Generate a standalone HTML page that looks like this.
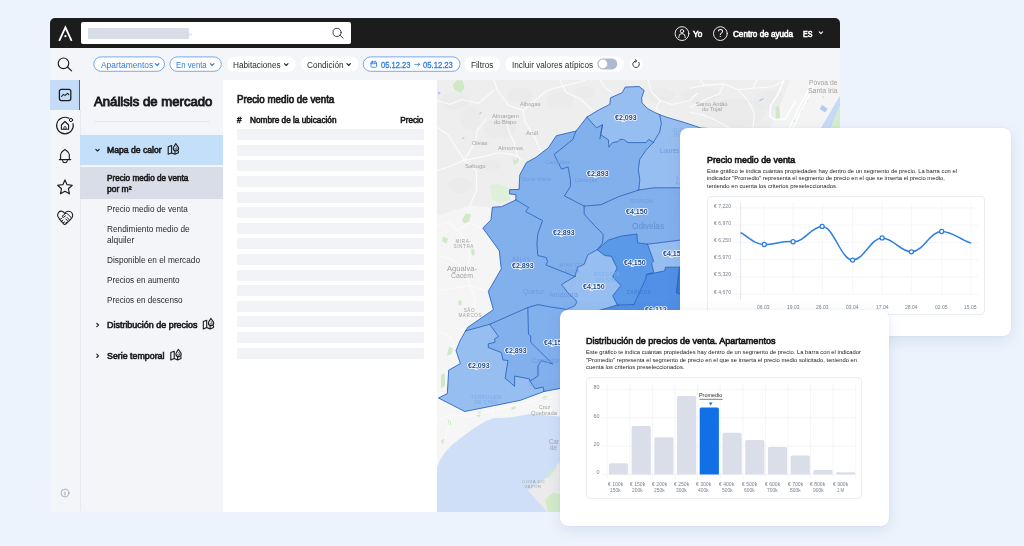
<!DOCTYPE html>
<html lang="es">
<head>
<meta charset="utf-8">
<title>Análisis de mercado</title>
<style>
*{box-sizing:border-box;margin:0;padding:0}
html,body{width:1024px;height:546px;overflow:hidden}
body{background:#ecf3fc;font-family:"Liberation Sans",sans-serif;color:#1c1c1e;position:relative}
#root{position:absolute;left:0;top:0;width:1024px;height:546px;will-change:transform}
.a{position:absolute}
.t{position:absolute;white-space:nowrap;line-height:1;transform-origin:0 0}
svg{position:absolute;overflow:visible}
#win{position:absolute;left:50px;top:18px;width:790px;height:493.5px;background:#f3f5f9;border-radius:5px 5px 0 0;overflow:hidden}
.pill{position:absolute;top:56.3px;height:15.4px;border-radius:8px;background:#fff}
.pill.b{border:1px solid #78aaea}
.row{position:absolute;left:237px;width:186.5px;height:11px;background:#f1f3f7;border-radius:1px}
.card{position:absolute;background:#fff;border-radius:8px;box-shadow:0 4px 14px rgba(80,110,160,.14),0 0 2px rgba(80,110,160,.10)}
.cbox{position:absolute;border:1px solid #e9ecf2;border-radius:4px;background:#fff}
</style>
</head>
<body>
<div id="root">
<div id="win"></div>
<div class="a" style="left:50px;top:18px;width:790px;height:30.2px;background:#1c1c1c;border-radius:5px 5px 0 0"></div>
<div class="a" style="left:81px;top:22.4px;width:270.3px;height:21.9px;background:#fff;border-radius:2px"></div>
<div class="a" style="left:87.5px;top:28.2px;width:101px;height:10.5px;background:#d9dde7;border-radius:1px"></div>
<div class="t" style="left:189.00px;top:31.00px;font-size:6px;color:#d5d9e2;">e</div>
<svg width="1024" height="546" viewBox="0 0 1024 546" style="left:0;top:0" fill="none" stroke-linecap="round" stroke-linejoin="round">
<path d="M59.2 40.900 L65.4 27.300 L71.600 40.900" stroke="#fff" stroke-width="1.800" stroke-linecap="butt" stroke-linejoin="miter"/><circle cx="65.4" cy="36.200" r="1.100" fill="#fff"/>
<circle cx="337.1" cy="32.4" r="4.1" stroke="#3a3a3c" stroke-width="0.95"/><path d="M340.1 35.3 L343.2 38.3" stroke="#3a3a3c" stroke-width="0.95"/>
<circle cx="682" cy="33.6" r="6.9" stroke="#fff" stroke-width="0.9"/><circle cx="682" cy="31.2" r="1.7" stroke="#fff" stroke-width="0.9"/><path d="M678.9 37.6 v-0.9 a3.1 3.1 0 0 1 6.2 0 v0.9" stroke="#fff" stroke-width="0.9"/>
<circle cx="720.4" cy="33.6" r="6.9" stroke="#fff" stroke-width="0.9"/>
<path d="M819.2 31.9 l1.7 1.7 l1.7 -1.7" stroke="#fff" stroke-width="1.05"/>
</svg>
<div class="t" style="left:717.55px;top:28.00px;font-size:10.6px;color:#fff;">?</div>
<div class="t" style="left:693.00px;top:30.00px;font-size:8.5px;-webkit-text-stroke:0.60px;color:#fff;transform:scaleX(0.9662);">Yo</div>
<div class="t" style="left:733.30px;top:30.00px;font-size:8.5px;-webkit-text-stroke:0.60px;color:#fff;transform:scaleX(0.9561);">Centro de ayuda</div>
<div class="t" style="left:802.60px;top:30.00px;font-size:8.5px;-webkit-text-stroke:0.60px;color:#fff;transform:scaleX(0.8287);">ES</div>
<div class="a" style="left:50px;top:79.5px;width:30.3px;height:30.3px;background:#c4dcf8;border-right:1.6px solid #1b6bd6"></div>
<div class="a" style="left:80.3px;top:109.8px;width:1px;height:401.7px;background:#e6e9ef"></div>
<svg width="1024" height="546" viewBox="0 0 1024 546" style="left:0;top:0">
<rect x="93.8" y="56.9" width="70.7" height="14.4" rx="7.2" fill="#fff" stroke="#78aaea" stroke-width="1"/>
<rect x="169.9" y="56.9" width="51.4" height="14.4" rx="7.2" fill="#fff" stroke="#78aaea" stroke-width="1"/>
<rect x="227.0" y="56.4" width="68.7" height="15.4" rx="7.7" fill="#fff"/>
<rect x="300.6" y="56.4" width="58.1" height="15.4" rx="7.7" fill="#fff"/>
<rect x="363.3" y="56.9" width="96.7" height="14.4" rx="7.2" fill="#fff" stroke="#78aaea" stroke-width="1"/>
<rect x="464.4" y="56.4" width="35.9" height="15.4" rx="7.7" fill="#fff"/>
<rect x="505.2" y="56.4" width="118.4" height="15.4" rx="7.7" fill="#fff"/>
<circle cx="636.2" cy="64.1" r="7.4" fill="#fff" stroke="#eceef3" stroke-width="0.6"/>
<rect x="597.4" y="58.5" width="19.9" height="10.9" rx="5.45" fill="#adb9d0"/><circle cx="602.9" cy="63.95" r="4.35" fill="#fff"/>
</svg>
<div class="t" style="left:100.50px;top:61.00px;font-size:8.3px;color:#2f7be0;transform:scaleX(1.0105);">Apartamentos</div>
<div class="t" style="left:176.10px;top:61.00px;font-size:8.3px;color:#2f7be0;transform:scaleX(0.9370);">En venta</div>
<div class="t" style="left:233.40px;top:61.00px;font-size:8.3px;color:#2a2a2e;transform:scaleX(0.9923);">Habitaciones</div>
<div class="t" style="left:307.20px;top:61.00px;font-size:8.3px;color:#2a2a2e;transform:scaleX(0.9917);">Condición</div>
<div class="t" style="left:380.60px;top:61.00px;font-size:8.9px;-webkit-text-stroke:0.31px;color:#2f7be0;transform:scaleX(0.8510);">05.12.23</div>
<div class="t" style="left:423.40px;top:61.00px;font-size:8.9px;-webkit-text-stroke:0.31px;color:#2f7be0;transform:scaleX(0.8626);">05.12.23</div>
<div class="t" style="left:471.30px;top:61.00px;font-size:8.3px;color:#2a2a2e;transform:scaleX(0.9914);">Filtros</div>
<div class="t" style="left:511.50px;top:61.00px;font-size:8.3px;color:#2a2a2e;transform:scaleX(0.9879);">Incluir valores atípicos</div>
<svg width="1024" height="546" viewBox="0 0 1024 546" style="left:0;top:0" fill="none" stroke-linecap="round" stroke-linejoin="round">
<path d="M155.4 63.7 l1.8 1.8 l1.8 -1.8" stroke="#2f7be0" stroke-width="1.1"/>
<path d="M210.4 63.7 l1.8 1.8 l1.8 -1.8" stroke="#2f7be0" stroke-width="1.1"/>
<path d="M284.4 63.7 l1.8 1.8 l1.8 -1.8" stroke="#2a2a2e" stroke-width="1.1"/>
<path d="M346.9 63.7 l1.8 1.8 l1.8 -1.8" stroke="#2a2a2e" stroke-width="1.1"/>
<rect x="371" y="61.900" width="5.600" height="5.400" rx="0.900" stroke="#2f7be0" stroke-width="0.850"/><path d="M371 63.700 h5.600 M372.500 61 v1.400 M375.100 61 v1.400" stroke="#2f7be0" stroke-width="0.850"/>
<path d="M414.600 64.400 h5.200 M418.100 62.800 l1.700 1.600 l-1.700 1.600" stroke="#2f7be0" stroke-width="0.8"/>
<path d="M638.8 62.300 a3.300 3.300 0 1 1 -2.600 -1.400" stroke="#2a2a2e" stroke-width="0.900"/><path d="M635.200 59.600 l1.500 1.300 l-1.400 1.500" stroke="#2a2a2e" stroke-width="0.900"/>
</svg>
<div class="t" style="left:94.00px;top:96.00px;font-size:12.5px;-webkit-text-stroke:0.88px;transform:scaleX(1.0519);">Análisis de mercado</div>
<div class="a" style="left:94px;top:120.8px;width:115.7px;height:1px;background:#e6e9ee"></div>
<div class="a" style="left:80.3px;top:134.9px;width:142.5px;height:30.3px;background:#c4dffa"></div>
<div class="a" style="left:80.3px;top:166.8px;width:142.5px;height:31.8px;background:#d9dde7"></div>
<div class="t" style="left:106.90px;top:146.00px;font-size:8.7px;-webkit-text-stroke:0.61px;transform:scaleX(0.9934);">Mapa de calor</div>
<div class="t" style="left:106.70px;top:174.00px;font-size:8.4px;-webkit-text-stroke:0.59px;transform:scaleX(0.9755);">Precio medio de venta</div>
<div class="t" style="left:106.70px;top:185.00px;font-size:8.4px;-webkit-text-stroke:0.59px;transform:scaleX(1.0123);">por m²</div>
<div class="t" style="left:106.70px;top:205.00px;font-size:8.4px;color:#2a2a2e;transform:scaleX(0.9707);">Precio medio de venta</div>
<div class="t" style="left:106.70px;top:225.00px;font-size:8.4px;color:#2a2a2e;transform:scaleX(0.9855);">Rendimiento medio de</div>
<div class="t" style="left:106.70px;top:236.00px;font-size:8.4px;color:#2a2a2e;transform:scaleX(1.0068);">alquiler</div>
<div class="t" style="left:106.70px;top:256.00px;font-size:8.4px;color:#2a2a2e;transform:scaleX(0.9840);">Disponible en el mercado</div>
<div class="t" style="left:106.70px;top:276.00px;font-size:8.4px;color:#2a2a2e;transform:scaleX(0.9732);">Precios en aumento</div>
<div class="t" style="left:106.70px;top:296.00px;font-size:8.4px;color:#2a2a2e;transform:scaleX(0.9711);">Precios en descenso</div>
<div class="t" style="left:106.70px;top:321.00px;font-size:8.7px;-webkit-text-stroke:0.61px;transform:scaleX(1.0297);">Distribución de precios</div>
<div class="t" style="left:106.70px;top:352.00px;font-size:8.7px;-webkit-text-stroke:0.61px;transform:scaleX(1.0177);">Serie temporal</div>
<div class="a" style="left:222.8px;top:79.5px;width:214.2px;height:432px;background:#fff"></div>
<div class="t" style="left:237.00px;top:95.00px;font-size:10.4px;-webkit-text-stroke:0.73px;transform:scaleX(0.9411);">Precio medio de venta</div>
<div class="t" style="left:237.30px;top:117.00px;font-size:8.2px;-webkit-text-stroke:0.57px;transform:scaleX(1.0082);">#</div>
<div class="t" style="left:250.00px;top:117.00px;font-size:8.2px;-webkit-text-stroke:0.57px;transform:scaleX(1.0054);">Nombre de la ubicación</div>
<div class="t" style="left:400.20px;top:117.00px;font-size:8.2px;-webkit-text-stroke:0.57px;">Precio</div>
<div class="row" style="top:129.10px"></div>
<div class="row" style="top:144.70px"></div>
<div class="row" style="top:160.30px"></div>
<div class="row" style="top:175.90px"></div>
<div class="row" style="top:191.50px"></div>
<div class="row" style="top:207.10px"></div>
<div class="row" style="top:222.70px"></div>
<div class="row" style="top:238.30px"></div>
<div class="row" style="top:253.90px"></div>
<div class="row" style="top:269.50px"></div>
<div class="row" style="top:285.10px"></div>
<div class="row" style="top:300.70px"></div>
<div class="row" style="top:316.30px"></div>
<div class="row" style="top:331.90px"></div>
<div class="row" style="top:347.50px"></div>
<div class="a" style="left:437px;top:79.5px;width:403px;height:432px;background:#eeeeee;overflow:hidden">
<svg width="403" height="432" viewBox="437 79.5 403 432" style="left:0;top:0;overflow:hidden" fill="none" stroke-linejoin="round" stroke-linecap="round">
<ellipse cx="455" cy="100" rx="14" ry="9" fill="#e7e7e7" opacity="0.4"/>
<ellipse cx="470" cy="118" rx="10" ry="12" fill="#e7e7e7" opacity="0.4"/>
<ellipse cx="500" cy="128" rx="16" ry="10" fill="#e7e7e7" opacity="0.4"/>
<ellipse cx="520" cy="95" rx="12" ry="8" fill="#e7e7e7" opacity="0.4"/>
<ellipse cx="560" cy="100" rx="14" ry="8" fill="#e7e7e7" opacity="0.4"/>
<ellipse cx="735" cy="112" rx="30" ry="14" fill="#e7e7e7" opacity="0.4"/>
<ellipse cx="700" cy="95" rx="20" ry="8" fill="#e7e7e7" opacity="0.4"/>
<ellipse cx="770" cy="100" rx="16" ry="10" fill="#e7e7e7" opacity="0.4"/>
<ellipse cx="660" cy="95" rx="14" ry="7" fill="#e7e7e7" opacity="0.4"/>
<ellipse cx="490" cy="165" rx="10" ry="6" fill="#e7e7e7" opacity="0.4"/>
<ellipse cx="460" cy="185" rx="12" ry="8" fill="#e7e7e7" opacity="0.4"/>
<ellipse cx="585" cy="92" rx="10" ry="6" fill="#e7e7e7" opacity="0.4"/>
<path d="M437 215 L470 205 L492 207 L491 219 L483 228 L499 250 L501 268 L488 291 L493 309 L468 327 L456 350 L460 363 L449 370 L447 393 L437 398 Z" fill="#f5f5f5"/>
<path d="M437 398 L438.5 397.5 L464.8 411 L520.5 399.8 L543.9 391 L566 387 L566 417 L530.7 413.5 L507.3 417.3 L494 417.5 L486 420.5 L476 426.5 L462 436.5 L452 444.5 L445 452 L440 460 L437 467 Z" fill="#f6f6f6"/>
<path d="M790 79.5 L840 79.5 L840 95.3 L820.5 128.5 L770 128.5 Z" fill="#f4f4f4"/>
<path d="M437 467 L440 460 L445 452 L452 444.500 L462 436.500 L476 426.500 L486 420.500 L494 417.500 L507.3 417.3 L530.7 413.500 L559.3 415.9 L600 415 L600 520 L437 520 Z" fill="#cfdff8"/>
<path d="M840 95.3 L830.6 110.9 L820.5 128.5 L830.6 128.5 L840 104.7 Z" fill="#c6daf6"/>
<path d="M840 104.7 L830.6 128.5 L840 128.5 Z" fill="#d4ecc8"/>
<path d="M819.6 108.4 l2.600 -3.800 l5.500 3.600 l-2.600 3.800 z" fill="#b4cbef"/>
<path d="M560 462 L557 464.3 L551 470 L545.4 477.5 L538 484 L527.8 490 L535 498 L546.8 511 L548 512 L600 512 L600 462 Z" fill="#ebebeb"/>
<path d="M557 464.3 L551 470 L545.4 477.5 L549 477 L556 468 Z M545 499 L553 492 L560 494 L560 512 L548 512 Z" fill="#d3ebc8"/>
<path d="M452.6 84.5 L457.1 79.5 L462.6 80 L464.5 87.2 L460.8 92.7 L454.4 89.1 Z" fill="#cfe9c8"/>
<path d="M512.5 157 l3 3.5 l2.5 -4 l0.5 5 l-4.5 3 z" fill="#cfe9c8"/>
<path d="M490 185 L497 183 L507 186 L509.5 189 L509.5 199 L500 203 L492 199 Z" fill="#dff0da"/>
<path d="M462 219 l4 -6 l5 1 l-2 7 l-5 2 z M471 249 l3 -1 l1 6 l-3 1 z M443 236 l5 2 l-1 5 l-5 -2 z M449 346 l4 2 l-2 6 l-4 1 z M441 374 l4 -1 l0 12 l-4 3 z M476 415 l3 -4 l2 0.500 l-1 5 z M511 407 l4 -2 l1 2.500 l-4 2 z M542 397 l4 -2 l2 3 l-4.500 2 z M448 420 l3 -1 l0 5 l-3 1 z M441 440 l3 -2 l1 4 l-3 2 z M458 301 l3 -2 l1 5 l-3 1 z" fill="#cfe9c8"/>
<path d="M775.6 106.2 l3.8 -0.4 l0.6 12 l-4.4 0.8 z M713 96 l1.5 0 l0 1.5 l-1.5 0 z" fill="#cfe9c8"/>
<path d="M812 92 l1.5 -2 l1 0.8 l-1.5 2 z M806 101 l1.5 -2 l1 0.8 l-1.5 2 z M800 112 l1.5 -2 l1 0.8 l-1.5 2 z M793 121 l1.500 -2 l1 0.8 l-1.5 2 z M822 97 l1.5 -2 l1 0.8 l-1.5 2 z" fill="#cfeac6"/>
<path d="M479 113 l2 -1.500 l0.800 0.800 l-2 1.500 z M462 138 l1.800 -1.500 l0.800 0.800 l-1.800 1.500 z M438 91 l2.500 1 l-0.500 2 l-2 -1 z M759 100 l4 -2.500 l0.800 1 l-4 2.500 z" fill="#a9c4f0"/>
<path d="M493.8 79.0 L497.4 90.0 L508.4 104.6 L523.1 110.1 L524.9 121.1 L535.9 139.4 L541.4 152.3 M437.0 126.6 L448.0 134.0 L457.1 148.6 L464.5 159.6 L476.4 170.6 L476.4 190.0 L470.0 205.0 M464.5 159.6 L484.6 155.9 L497.4 152.3 L513.9 154.1 L523.1 159.6 M486.5 117.5 L477.3 130.3 L475.5 141.3 L464.5 159.6 M523.1 110.1 L546.9 90.0 L567.0 84.5 L585.0 80.0 M506.6 123.0 L510.3 134.0 L514.0 141.3 L517.6 156.0 M437.0 100.0 L450.0 104.0 L462.0 99.0 L478.0 103.0 L493.8 90.0 M437.0 170.0 L450.0 166.0 L464.5 159.6 M560.0 79.5 L566.0 92.0 L580.0 98.0 L592.0 110.0 M600.0 79.5 L606.0 88.0 L612.0 92.0 M648.0 79.5 L652.0 92.0 L660.0 100.0 L672.0 104.0 L690.0 100.0 L697.0 93.0 M690.0 87.8 L704.6 84.9 L723.7 83.4 L738.3 89.3 L753.0 87.8 L772.0 86.3 L783.7 80.5 M723.7 83.4 L719.3 93.6 L707.6 98.0 L690.0 106.8 M738.3 89.3 L748.6 101.0 L754.4 112.7 L753.0 127.3 M704.6 84.9 L700.0 79.5 M753.0 87.8 L757.0 79.5 M690.0 112.0 L702.0 114.0 L716.0 120.0 L730.0 128.0 M660.0 100.0 L656.0 108.0 L664.0 116.0 L676.0 119.0 M437.0 225.0 L448.0 222.0 L458.0 230.0 L466.0 240.0 L470.0 256.0 L466.0 270.0 L470.0 285.0 L476.0 300.0 L470.0 318.0 L462.0 330.0 M437.0 255.0 L450.0 258.0 L466.0 270.0 M458.0 230.0 L470.0 222.0 L483.0 228.0 M437.0 290.0 L452.0 288.0 L470.0 285.0 L488.0 291.0 M437.0 330.0 L450.0 336.0 L456.0 350.0 M437.0 420.0 L452.0 414.0 L470.0 416.0 L492.0 410.0 L520.0 404.0 L545.0 398.0 L566.0 394.0 M452.0 414.0 L447.0 430.0 L444.0 443.0 M492.0 410.0 L494.0 417.0" stroke="#fbfbfb" stroke-width="1.1" fill="none"/>
<path d="M783.7 80.5 L777.9 93.6 L770.6 105.4 L769.8 115.6 L775.0 119.3 L785.2 118.5 L791.0 108.3 L795.5 101.0 M812.0 79.5 L808.6 89.3 L798.4 108.3 L789.6 127.3 L788.0 131.0 M816.0 79.5 L811.6 90.3 L801.4 109.3 L792.6 128.3" stroke="#ffffff" stroke-width="1.5" fill="none"/>
<path d="M586.9 116.6 L599.5 109.0 L609.8 103.9 L610.5 97.3 L622.2 92.2 L625.2 86.6 L639.1 86.0 L644.2 90.0 L641.7 97.3 L642.0 102.4 L647.9 108.3 L654.5 111.9 L659.6 114.1 L661.3 122.9 L659.6 131.7 L653.4 141.8 L648.7 138.9 L646.0 142.1 L628.1 142.1 L623.5 138.9 L619.9 138.9 L618.0 141.2 L612.5 142.1 L608.9 146.7 L608.4 139.3 L600.6 134.3 L602.5 124.2 L596.5 127.4 L586.9 116.6 Z" fill="#90baf0" fill-opacity="0.93"/>
<path d="M659.6 114.1 L665.0 116.2 L684.5 122.0 L700.9 127.5 L712.0 128.3 L720.0 140.0 L720.0 187.3 L690.0 187.3 L653.7 187.3 L638.8 189.5 L639.8 179.3 L638.3 169.0 L639.8 158.8 L645.7 150.0 L653.4 141.8 L659.6 131.7 L661.3 122.9 Z" fill="#90baf0" fill-opacity="0.93"/>
<path d="M576.1 130.5 L586.9 116.6 L596.5 127.4 L602.5 124.2 L600.6 134.3 L608.4 139.3 L608.9 146.7 L612.5 142.1 L618.0 141.2 L619.9 138.9 L623.5 138.9 L628.1 142.1 L646.0 142.1 L648.7 138.9 L653.4 141.8 L645.7 150.0 L639.8 158.8 L638.3 169.0 L639.8 179.3 L638.8 189.5 L618.6 196.1 L601.0 204.2 L584.2 205.6 L564.4 195.4 L570.3 186.0 L570.5 180.0 L568.1 166.4 L561.5 168.6 L554.2 153.9 L572.5 139.3 L576.1 130.5 Z" fill="#79abed" fill-opacity="0.93"/>
<path d="M576.1 130.5 L556.4 135.2 L548.3 147.3 L535.9 156.9 L526.4 162.0 L519.8 174.4 L519.0 189.0 L509.6 189.1 L509.6 193.5 L515.9 194.1 L515.9 199.4 L528.6 207.0 L525.7 211.1 L542.5 220.1 L537.8 233.3 L536.9 243.6 L537.8 255.0 L546.2 257.0 L547.6 260.9 L546.1 264.5 L575.0 276.0 L577.6 266.7 L584.2 263.8 L587.8 254.3 L597.3 249.2 L602.5 242.6 L603.2 233.8 L594.4 225.0 L584.2 213.7 L584.2 205.6 L564.4 195.4 L570.3 186.0 L570.5 180.0 L568.1 166.4 L561.5 168.6 L554.2 153.9 L572.5 139.3 L576.1 130.5 Z" fill="#79abed" fill-opacity="0.93"/>
<path d="M515.9 199.4 L501.5 206.2 L492.4 206.7 L491.0 219.4 L482.8 227.5 L499.3 250.2 L500.8 265.0 L501.4 268.2 L488.3 290.9 L493.4 309.2 L467.8 326.8 L465.6 330.4 L489.7 323.8 L527.8 307.0 L538.0 304.1 L550.0 306.4 L566.6 308.9 L574.4 305.5 L576.8 302.0 L575.5 299.0 L569.5 294.2 L561.5 284.0 L575.0 276.0 L546.1 264.5 L547.6 260.9 L546.2 257.0 L537.8 255.0 L536.9 243.6 L537.8 233.3 L542.5 220.1 L525.7 211.1 L528.6 207.0 L515.9 199.4 Z" fill="#79abed" fill-opacity="0.93"/>
<path d="M584.2 205.6 L584.2 213.7 L594.4 225.0 L603.2 233.8 L602.5 242.6 L597.3 249.2 L608.3 239.6 L621.5 235.5 L636.9 233.5 L637.6 242.3 L647.6 243.7 L690.0 238.4 L690.0 187.3 L653.7 187.3 L638.8 189.5 L618.6 196.1 L601.0 204.2 L584.2 205.6 Z" fill="#79abed" fill-opacity="0.93"/>
<path d="M597.3 249.2 L587.8 254.3 L584.2 263.8 L577.6 266.7 L575.0 276.0 L561.5 284.0 L569.5 294.2 L575.5 299.0 L576.8 302.0 L574.4 305.5 L566.6 308.9 L566.6 314.0 L590.0 314.0 L598.8 310.0 L617.4 304.5 L612.7 295.3 L620.8 285.0 L612.7 276.3 L617.1 267.5 L611.3 255.8 L604.7 255.0 Z" fill="#90baf0" fill-opacity="0.93"/>
<path d="M597.3 249.2 L608.3 239.6 L621.5 235.5 L636.9 233.5 L637.6 242.3 L647.6 243.7 L653.7 260.9 L651.5 262.3 L653.7 271.9 L646.4 274.1 L645.7 278.4 L634.0 304.0 L617.4 304.5 L612.7 295.3 L620.8 285.0 L612.7 276.3 L617.1 267.5 L611.3 255.8 L604.7 255.0 Z" fill="#4f92e7" fill-opacity="0.93"/>
<path d="M647.6 243.7 L690.0 238.4 L690.0 266.7 L665.4 266.7 L664.7 270.4 L646.4 274.1 L653.7 271.9 L651.5 262.3 L653.7 260.9 Z" fill="#90baf0" fill-opacity="0.93"/>
<path d="M646.4 274.1 L664.7 270.4 L665.4 266.7 L690.0 266.7 L690.0 314.0 L590.0 314.0 L598.8 310.0 L617.4 304.5 L634.0 304.0 L645.7 278.4 Z" fill="#4589e5" fill-opacity="0.93"/>
<path d="M679.3 266.7 L676.4 292.4 L690.0 296.0 L690.0 266.7 Z" fill="#2f79df" fill-opacity="0.93"/>
<path d="M465.6 330.4 L460.4 339.6 L456.0 349.9 L460.4 363.1 L448.7 369.7 L447.3 393.1 L438.5 397.5 L464.8 411.0 L520.5 399.8 L543.9 391.0 L543.9 391.0 L543.2 386.5 L535.1 388.3 L530.0 380.6 L530.0 380.6 L529.3 378.4 L514.6 375.5 L514.6 385.8 L505.1 377.7 L508.0 360.1 L502.9 359.4 L501.4 352.1 L488.3 347.0 L488.3 343.3 L494.8 341.8 L494.8 338.2 L498.5 336.0 L489.7 323.8 L465.6 330.4 Z" fill="#90baf0" fill-opacity="0.93"/>
<path d="M489.7 323.8 L527.8 307.0 L528.5 333.8 L530.7 335.3 L530.7 341.8 L552.7 363.4 L541.7 360.1 L538.0 365.3 L538.0 375.5 L530.0 380.6 L529.3 378.4 L514.6 375.5 L514.6 385.8 L505.1 377.7 L508.0 360.1 L502.9 359.4 L501.4 352.1 L488.3 347.0 L488.3 343.3 L494.8 341.8 L494.8 338.2 L498.5 336.0 L489.7 323.8 Z" fill="#79abed" fill-opacity="0.93"/>
<path d="M527.8 307.0 L538.0 304.1 L550.0 306.4 L566.6 308.9 L566.6 387.0 L543.9 391.0 L543.9 391.0 L543.2 386.5 L535.1 388.3 L530.0 380.6 L538.0 375.5 L538.0 365.3 L541.7 360.1 L552.7 363.4 L530.7 341.8 L530.7 335.3 L528.5 333.8 L527.8 307.0 Z" fill="#79abed" fill-opacity="0.93"/>
<path d="M586.9 116.6 L599.5 109.0 L609.8 103.9 L610.5 97.3 L622.2 92.2 L625.2 86.6 L639.1 86.0 L644.2 90.0 L641.7 97.3 L642.0 102.4 L647.9 108.3 L654.5 111.9 L659.6 114.1 M659.6 114.1 L661.3 122.9 L659.6 131.7 L653.4 141.8 M653.4 141.8 L648.7 138.9 L646.0 142.1 L628.1 142.1 L623.5 138.9 L619.9 138.9 L618.0 141.2 L612.5 142.1 L608.9 146.7 L608.4 139.3 L600.6 134.3 L602.5 124.2 L596.5 127.4 L586.9 116.6 M659.6 114.1 L665.0 116.2 L684.5 122.0 L700.9 127.5 L712.0 128.3 L720.0 140.0 M653.4 141.8 L645.7 150.0 L639.8 158.8 L638.3 169.0 L639.8 179.3 L638.8 189.5 M638.8 189.5 L618.6 196.1 L601.0 204.2 L584.2 205.6 M584.2 205.6 L564.4 195.4 L570.3 186.0 L570.5 180.0 L568.1 166.4 L561.5 168.6 L554.2 153.9 L572.5 139.3 L576.1 130.5 M586.9 116.6 L581.3 123.9 L576.1 130.5 L556.4 135.2 L548.3 147.3 L535.9 156.9 L526.4 162.0 L519.8 174.4 L519.0 189.0 L509.6 189.1 L509.6 193.5 L515.9 194.1 L515.9 199.4 M515.9 199.4 L501.5 206.2 L492.4 206.7 L491.0 219.4 L482.8 227.5 L499.3 250.2 L500.8 265.0 L501.4 268.2 L488.3 290.9 L493.4 309.2 L467.8 326.8 L465.6 330.4 M465.6 330.4 L460.4 339.6 L456.0 349.9 L460.4 363.1 L448.7 369.7 L447.3 393.1 L438.5 397.5 L464.8 411.0 L520.5 399.8 L543.9 391.0 M515.9 199.4 L528.6 207.0 L525.7 211.1 L542.5 220.1 L537.8 233.3 L536.9 243.6 L537.8 255.0 L546.2 257.0 L547.6 260.9 L546.1 264.5 L575.0 276.0 M584.2 205.6 L584.2 213.7 L594.4 225.0 L603.2 233.8 L602.5 242.6 L597.3 249.2 M597.3 249.2 L587.8 254.3 L584.2 263.8 L577.6 266.7 L575.0 276.0 M465.6 330.4 L489.7 323.8 L527.8 307.0 L538.0 304.1 L550.0 306.4 L566.6 308.9 L574.4 305.5 L576.8 302.0 L575.5 299.0 L569.5 294.2 L561.5 284.0 L575.0 276.0 M597.3 249.2 L608.3 239.6 L621.5 235.5 L636.9 233.5 L637.6 242.3 L647.6 243.7 M647.6 243.7 L653.7 260.9 L651.5 262.3 L653.7 271.9 L646.4 274.1 L645.7 278.4 L634.0 304.0 M597.3 249.2 L604.7 255.0 L611.3 255.8 L617.1 267.5 L612.7 276.3 L620.8 285.0 L612.7 295.3 L617.4 304.5 M617.4 304.5 L634.0 304.0 M617.4 304.5 L598.8 310.0 L590.0 314.0 M647.6 243.7 L690.0 238.4 M638.8 189.5 L653.7 187.3 L690.0 187.3 M646.4 274.1 L664.7 270.4 L665.4 266.7 L690.0 266.7 M679.3 266.7 L676.4 292.4 L690.0 296.0 M489.7 323.8 L498.5 336.0 L494.8 338.2 L494.8 341.8 L488.3 343.3 L488.3 347.0 L501.4 352.1 L502.9 359.4 L508.0 360.1 L505.1 377.7 L514.6 385.8 L514.6 375.5 L529.3 378.4 L530.0 380.6 M527.8 307.0 L528.5 333.8 L530.7 335.3 L530.7 341.8 L552.7 363.4 L541.7 360.1 L538.0 365.3 L538.0 375.5 L530.0 380.6 M530.0 380.6 L535.1 388.3 L543.2 386.5 L543.9 391.0 M543.9 391.0 L565.0 387.0 M602.5 124.2 L599.9 138.4" stroke="#2660bb" stroke-width="0.85"/>
</svg>
</div>
<div class="t" style="left:519.75px;top:101.00px;font-size:6.2px;color:#a2a2a2;transform:scaleX(0.9162);">Albogas</div>
<div class="t" style="left:491.50px;top:113.00px;font-size:6.2px;color:#a2a2a2;transform:scaleX(0.9573);">Almargem</div>
<div class="t" style="left:493.75px;top:119.00px;font-size:6.2px;color:#a2a2a2;transform:scaleX(0.9339);">do Bispo</div>
<div class="t" style="left:525.50px;top:130.00px;font-size:6.2px;color:#a2a2a2;transform:scaleX(0.9685);">Arull</div>
<div class="t" style="left:472.25px;top:140.00px;font-size:6.2px;color:#a2a2a2;transform:scaleX(0.8833);">Oleias</div>
<div class="t" style="left:498.00px;top:145.00px;font-size:6.2px;color:#a2a2a2;transform:scaleX(0.9564);">Almornos</div>
<div class="t" style="left:464.75px;top:163.00px;font-size:6.2px;color:#a2a2a2;transform:scaleX(0.9605);">Sabugo</div>
<div class="t" style="left:455.49px;top:240.00px;font-size:4.6px;color:#a2a2a2;letter-spacing:0.6px;">MIRA-</div>
<div class="t" style="left:453.57px;top:245.00px;font-size:4.6px;color:#a2a2a2;letter-spacing:0.6px;">SINTRA</div>
<div class="t" style="left:447.00px;top:265.00px;font-size:7.6px;color:#a2a2a2;">Agualva-</div>
<div class="t" style="left:451.00px;top:272.00px;font-size:7.6px;color:#a2a2a2;transform:scaleX(0.9143);">Cacém</div>
<div class="t" style="left:463.65px;top:309.00px;font-size:4.6px;color:#a2a2a2;letter-spacing:0.6px;">SÃO</div>
<div class="t" style="left:458.41px;top:314.00px;font-size:4.6px;color:#a2a2a2;letter-spacing:0.6px;">MARCOS</div>
<div class="t" style="left:696.25px;top:101.00px;font-size:6.2px;color:#a2a2a2;transform:scaleX(0.9342);">Santo Antão</div>
<div class="t" style="left:702.00px;top:106.00px;font-size:6.2px;color:#a2a2a2;transform:scaleX(0.9426);">do Tojal</div>
<div class="t" style="left:808.75px;top:79.00px;font-size:7.2px;color:#a2a2a2;transform:scaleX(0.9383);">Póvoa de</div>
<div class="t" style="left:808.25px;top:87.00px;font-size:7.2px;color:#a2a2a2;transform:scaleX(0.9589);">Santa Iria</div>
<div class="t" style="left:538.80px;top:404.00px;font-size:6.2px;color:#a2a2a2;transform:scaleX(0.8411);">Cruz</div>
<div class="t" style="left:531.00px;top:410.00px;font-size:6.2px;color:#a2a2a2;transform:scaleX(0.9444);">Quebrada</div>
<div class="t" style="left:522.11px;top:480.00px;font-size:4.2px;color:#a2a2a2;letter-spacing:0.6px;">COVA DO</div>
<div class="t" style="left:524.32px;top:485.00px;font-size:4.2px;color:#a2a2a2;letter-spacing:0.6px;">VAPOR</div>
<div class="t" style="left:548.50px;top:438.00px;font-size:7.2px;color:#a2a2a2;transform:scaleX(0.8625);">Car</div>
<div class="t" style="left:550.00px;top:444.00px;font-size:7.2px;color:#a2a2a2;transform:scaleX(0.8750);">de</div>
<div class="t" style="left:544.50px;top:159.00px;font-size:6.2px;color:#6c9be0;transform:scaleX(0.8758);">Camarões</div>
<div class="t" style="left:521.50px;top:176.00px;font-size:6.2px;color:#6c9be0;transform:scaleX(0.9067);">Dona Maria</div>
<div class="t" style="left:574.75px;top:177.00px;font-size:6.2px;color:#6c9be0;transform:scaleX(0.9213);">Caneças</div>
<div class="t" style="left:630.17px;top:200.00px;font-size:4.6px;color:#6c9be0;letter-spacing:0.6px;">RAMADA</div>
<div class="t" style="left:632.00px;top:222.00px;font-size:8.6px;color:#628fd2;transform:scaleX(0.9570);">Odivelas</div>
<div class="t" style="left:660.25px;top:147.00px;font-size:7.6px;color:#6d9bdb;transform:scaleX(0.8393);">Loures</div>
<div class="t" style="left:673.49px;top:129.00px;font-size:4.6px;color:#7aa6e2;letter-spacing:0.6px;">QUINTA</div>
<div class="t" style="left:674.30px;top:134.00px;font-size:4.6px;color:#7aa6e2;letter-spacing:0.6px;">INFANTE</div>
<div class="t" style="left:676.12px;top:177.00px;font-size:4.6px;color:#7aa6e2;letter-spacing:0.6px;">SANTO</div>
<div class="t" style="left:675.53px;top:182.00px;font-size:4.6px;color:#7aa6e2;letter-spacing:0.6px;">ANTÓNIO</div>
<div class="t" style="left:672.66px;top:193.00px;font-size:4.6px;color:#80abe8;letter-spacing:0.6px;">CAVALEIROS</div>
<div class="t" style="left:675.83px;top:204.00px;font-size:4.6px;color:#80abe8;letter-spacing:0.6px;">PÓVOA</div>
<div class="t" style="left:674.30px;top:210.00px;font-size:4.6px;color:#80abe8;letter-spacing:0.6px;">DE SANTO</div>
<div class="t" style="left:675.19px;top:215.00px;font-size:4.6px;color:#80abe8;letter-spacing:0.6px;">ADRIÃO</div>
<div class="t" style="left:512.59px;top:258.00px;font-size:4.6px;color:#6c9be0;letter-spacing:0.6px;">BELAS</div>
<div class="t" style="left:522.50px;top:288.00px;font-size:7.4px;color:#6c9be0;transform:scaleX(0.8966);">Queluz</div>
<div class="t" style="left:548.50px;top:291.00px;font-size:7.4px;color:#6c9be0;transform:scaleX(0.9667);">Amadora</div>
<div class="t" style="left:559.55px;top:264.00px;font-size:4.6px;color:#6c9be0;letter-spacing:0.6px;">MINA DE</div>
<div class="t" style="left:564.48px;top:270.00px;font-size:4.6px;color:#6c9be0;letter-spacing:0.6px;">AGUA</div>
<div class="t" style="left:594.06px;top:273.00px;font-size:4.6px;color:#80abe8;letter-spacing:0.6px;">ENCOSTA</div>
<div class="t" style="left:596.32px;top:279.00px;font-size:4.6px;color:#80abe8;letter-spacing:0.6px;">DO SOL</div>
<div class="t" style="left:626.66px;top:291.00px;font-size:4.6px;color:#3f7ad2;letter-spacing:0.6px;">CARNIDE</div>
<div class="t" style="left:470.85px;top:396.00px;font-size:4.6px;color:#80abe8;letter-spacing:0.6px;">TERRUGEM</div>
<div class="t" style="left:474.42px;top:401.00px;font-size:4.6px;color:#80abe8;letter-spacing:0.6px;">DE CIMA</div>
<div class="t" style="left:532.00px;top:358.00px;font-size:6.6px;color:#6c9be0;transform:scaleX(0.9314);">Carnaxide</div>
<div class="t" style="left:529.00px;top:381.00px;font-size:6.6px;color:#80abe8;transform:scaleX(0.9336);">Linda-a-Velha</div>
<div class="t" style="left:615.15px;top:114.00px;font-size:7.2px;font-weight:700;color:#1d478f;transform:scaleX(0.9871);-webkit-text-stroke:1.7px rgba(255,255,255,.92);paint-order:stroke fill;">€2,093</div>
<div class="t" style="left:587.15px;top:170.00px;font-size:7.2px;font-weight:700;color:#1d478f;transform:scaleX(0.9871);-webkit-text-stroke:1.7px rgba(255,255,255,.92);paint-order:stroke fill;">€2,893</div>
<div class="t" style="left:553.15px;top:229.00px;font-size:7.2px;font-weight:700;color:#1d478f;transform:scaleX(0.9871);-webkit-text-stroke:1.7px rgba(255,255,255,.92);paint-order:stroke fill;">€2,893</div>
<div class="t" style="left:512.15px;top:262.00px;font-size:7.2px;font-weight:700;color:#1d478f;transform:scaleX(0.9871);-webkit-text-stroke:1.7px rgba(255,255,255,.92);paint-order:stroke fill;">€2,893</div>
<div class="t" style="left:625.65px;top:208.00px;font-size:7.2px;font-weight:700;color:#1d478f;transform:scaleX(0.9871);-webkit-text-stroke:1.7px rgba(255,255,255,.92);paint-order:stroke fill;">€4,150</div>
<div class="t" style="left:623.65px;top:259.00px;font-size:7.2px;font-weight:700;color:#1d478f;transform:scaleX(0.9871);-webkit-text-stroke:1.7px rgba(255,255,255,.92);paint-order:stroke fill;">€4,150</div>
<div class="t" style="left:583.15px;top:283.00px;font-size:7.2px;font-weight:700;color:#1d478f;transform:scaleX(0.9871);-webkit-text-stroke:1.7px rgba(255,255,255,.92);paint-order:stroke fill;">€4,150</div>
<div class="t" style="left:663.15px;top:250.00px;font-size:7.2px;font-weight:700;color:#1d478f;transform:scaleX(0.9871);-webkit-text-stroke:1.7px rgba(255,255,255,.92);paint-order:stroke fill;">€4,150</div>
<div class="t" style="left:468.15px;top:362.00px;font-size:7.2px;font-weight:700;color:#1d478f;transform:scaleX(0.9871);-webkit-text-stroke:1.7px rgba(255,255,255,.92);paint-order:stroke fill;">€2,093</div>
<div class="t" style="left:505.15px;top:347.00px;font-size:7.2px;font-weight:700;color:#1d478f;transform:scaleX(0.9871);-webkit-text-stroke:1.7px rgba(255,255,255,.92);paint-order:stroke fill;">€2,893</div>
<div class="t" style="left:543.65px;top:339.00px;font-size:7.2px;font-weight:700;color:#1d478f;transform:scaleX(0.9871);-webkit-text-stroke:1.7px rgba(255,255,255,.92);paint-order:stroke fill;">€4,150</div>
<div class="t" style="left:645.15px;top:306.00px;font-size:7.2px;font-weight:700;color:#1d478f;transform:scaleX(1.0049);-webkit-text-stroke:1.7px rgba(255,255,255,.92);paint-order:stroke fill;">€6,112</div>
<svg width="1024" height="546" viewBox="0 0 1024 546" style="left:0;top:0" fill="none" stroke="#1c1c1e" stroke-linecap="round" stroke-linejoin="round">
<circle cx="63.5" cy="63.3" r="5.3" stroke-width="1.15"/><path d="M67.4 67 L71.6 70.900" stroke-width="1.15"/>
<rect x="59.4" y="89.3" width="11.4" height="11.3" rx="2" stroke-width="1.25"/><path d="M61.5 96.500 L63.200 94.500 L65.100 95.400 L67.500 93.400 L68.800 94.700" stroke-width="1.05"/>
<path d="M68.85 118.27 A8.3 8.3 0 1 0 73.00 123.59" stroke-width="1.1"/>
<circle cx="71" cy="120" r="1.600" stroke-width="1"/>
<path d="M61.4 125 L64.950 121.500 L68.600 125 V129.200 H61.400 Z" stroke-width="1.1"/><path d="M63.900 129.200 V127.600 a1.100 1.100 0 0 1 2.200 0 V129.200" stroke-width="0.9"/>
<path d="M59.3 159.600 H70.700 M60.600 159.600 V154.600 C60.600 152.300 62.900 151.300 64.950 149.300 C67 151.300 69.300 152.300 69.300 154.600 V159.600" stroke-width="1.1"/>
<path d="M62.500 160.600 A2.500 2.600 0 0 0 67.400 160.600" stroke-width="1.050"/>
<path d="M64.95 179.90 L67.07 184.69 L72.27 185.22 L68.37 188.71 L69.48 193.83 L64.95 191.20 L60.42 193.83 L61.53 188.71 L57.63 185.22 L62.83 184.69 Z" stroke-width="1.150"/>
<path d="M64.7 213.400 C63.600 211.100 60.300 210.300 58.700 212.300 C57.100 214.300 57.700 216.800 59.200 218.400 L59.500 219.600 L60.900 220.300 L61.300 221.800 L62.800 222.300 L63.300 223.700 C64.200 224.700 65.400 224.600 66.300 223.700 L70.800 219.200 C72.600 217.300 73.300 214.600 71.600 212.500 C69.900 210.400 66.200 210.900 64.700 213.400 Z" stroke-width="1.050"/>
<path d="M62.500 216 L65 213.800 C65.900 213.100 67 213.300 67.800 214.100 L71.200 217.700 M62.500 216 C61.900 216.800 62.600 217.800 63.500 217.300 L65.500 215.900" stroke-width="1"/>
<path d="M59.700 219.400 l1.800 -0.900 M61.300 221.500 l1.700 -1.300 M63.100 223.200 l1.700 -1.400 M65.500 223.300 l1.500 -1.200 M67.100 217.500 l2.400 2.500 M65.700 218.900 l2.300 2.300" stroke-width="0.950"/>
<circle cx="65" cy="493" r="3.900" stroke="#8a93a6" stroke-width="0.700"/><path d="M65 492.400 V495" stroke="#8a93a6" stroke-width="0.800"/><circle cx="65" cy="491" r="0.450" fill="#8a93a6" stroke="none"/>
<path d="M95.800 149.300 l1.700 1.700 l1.700 -1.700" stroke-width="1.150"/>
<path d="M96.800 323.300 l1.700 1.700 l-1.700 1.700" stroke-width="1.150"/>
<path d="M96.800 354.100 l1.700 1.700 l-1.700 1.700" stroke-width="1.150"/>
<g transform="translate(0.0 0.0)" stroke-width="1.1"><path d="M168.2 146.8 L171.6 145.5 V152.9 L168.2 154.3 Z"/><path d="M171.6 152.9 L175 154.3 L178.4 152.7 V151.2 M175 154.3 V151.4"/><path d="M175.7 143.6 C176.600 145.300 178.600 146.400 178.600 148.300 A2.650 2.650 0 0 1 173.300 148.300 C173.300 146.500 175.100 145.400 175.700 143.600 Z"/><path d="M176 146.600 C176.500 147.300 177 147.800 177 148.500 A1 1 0 0 1 175 148.500" stroke-width="0.7"/></g>
<g transform="translate(35.1 174.7)" stroke-width="1.1"><path d="M168.2 146.8 L171.6 145.5 V152.9 L168.2 154.3 Z"/><path d="M171.6 152.9 L175 154.3 L178.4 152.7 V151.2 M175 154.3 V151.4"/><path d="M175.7 143.6 C176.600 145.300 178.600 146.400 178.600 148.300 A2.650 2.650 0 0 1 173.300 148.300 C173.300 146.500 175.100 145.400 175.700 143.600 Z"/><path d="M176 146.600 C176.500 147.300 177 147.800 177 148.500 A1 1 0 0 1 175 148.500" stroke-width="0.7"/></g>
<g transform="translate(2.6 205.7)" stroke-width="1.1"><path d="M168.2 146.8 L171.6 145.5 V152.9 L168.2 154.3 Z"/><path d="M171.6 152.9 L175 154.3 L178.4 152.7 V151.2 M175 154.3 V151.4"/><path d="M175.7 143.6 C176.600 145.300 178.600 146.400 178.600 148.300 A2.650 2.650 0 0 1 173.300 148.300 C173.300 146.500 175.100 145.400 175.700 143.600 Z"/><path d="M176 146.600 C176.500 147.300 177 147.800 177 148.500 A1 1 0 0 1 175 148.500" stroke-width="0.7"/></g>
</svg><div class="card" style="left:680px;top:128.4px;width:331.4px;height:208px"></div>
<div class="t" style="left:706.90px;top:155.00px;font-size:9.8px;-webkit-text-stroke:0.69px;transform:scaleX(0.9048);">Precio medio de venta</div>
<div class="t" style="left:706.90px;top:168.00px;font-size:6.2px;color:#222226;transform:scaleX(0.9415);">Este gráfico te indica cuántas propiedades hay dentro de un segmento de precio. La barra con el</div>
<div class="t" style="left:706.90px;top:175.00px;font-size:6.2px;color:#222226;transform:scaleX(0.9409);">indicador "Promedio" representa el segmento de precio en el que se inserta el precio medio,</div>
<div class="t" style="left:706.90px;top:183.00px;font-size:6.2px;color:#222226;transform:scaleX(0.9515);">teniendo en cuenta los criterios preseleccionados.</div>
<div class="cbox" style="left:706.6px;top:196.3px;width:278.4px;height:119px"></div>
<svg width="1024" height="546" viewBox="0 0 1024 546" style="left:0;top:0" fill="none">
<path d="M734 207.9 H978.2" stroke="#f0f2f6" stroke-width="0.8"/>
<path d="M734 225.1 H978.2" stroke="#f0f2f6" stroke-width="0.8"/>
<path d="M734 242.4 H978.2" stroke="#f0f2f6" stroke-width="0.8"/>
<path d="M734 259.7 H978.2" stroke="#f0f2f6" stroke-width="0.8"/>
<path d="M734 276.9 H978.2" stroke="#f0f2f6" stroke-width="0.8"/>
<path d="M734 294.1 H978.2" stroke="#f0f2f6" stroke-width="0.8"/>
<path d="M763.8 203 V294.1" stroke="#f2f4f8" stroke-width="0.8"/>
<path d="M793.1 203 V294.1" stroke="#f2f4f8" stroke-width="0.8"/>
<path d="M822.4 203 V294.1" stroke="#f2f4f8" stroke-width="0.8"/>
<path d="M852.6 203 V294.1" stroke="#f2f4f8" stroke-width="0.8"/>
<path d="M882.1 203 V294.1" stroke="#f2f4f8" stroke-width="0.8"/>
<path d="M911.4 203 V294.1" stroke="#f2f4f8" stroke-width="0.8"/>
<path d="M941.7 203 V294.1" stroke="#f2f4f8" stroke-width="0.8"/>
<path d="M971.0 203 V294.1" stroke="#f2f4f8" stroke-width="0.8"/>
<path d="M740.6 203 V300" stroke="#e1e4ef" stroke-width="0.9"/>
<path d="M741.2 232.9 C750.1 238.4 755.4 244.5 764.3 244.5 C775.3 244.5 782.1 240.6 793.1 241.7 C804.2 242.8 811.0 226.4 822.1 226.4 C833.8 226.4 840.9 260.1 852.6 260.1 C863.9 260.1 870.8 237.9 882.1 237.9 C893.3 237.9 900.2 251.8 911.4 251.8 C923.0 251.8 930.1 231.5 941.7 231.5 C952.7 231.5 959.5 239.4 970.5 242.9" stroke="#2b7de2" stroke-width="1.5" stroke-linecap="round"/>
<circle cx="764.3" cy="244.5" r="2.05" fill="#fff" stroke="#2b7de2" stroke-width="1.25"/>
<circle cx="793.1" cy="241.7" r="2.05" fill="#fff" stroke="#2b7de2" stroke-width="1.25"/>
<circle cx="822.1" cy="226.4" r="2.05" fill="#fff" stroke="#2b7de2" stroke-width="1.25"/>
<circle cx="852.6" cy="260.1" r="2.05" fill="#fff" stroke="#2b7de2" stroke-width="1.25"/>
<circle cx="882.1" cy="237.9" r="2.05" fill="#fff" stroke="#2b7de2" stroke-width="1.25"/>
<circle cx="911.4" cy="251.8" r="2.05" fill="#fff" stroke="#2b7de2" stroke-width="1.25"/>
<circle cx="941.7" cy="231.5" r="2.05" fill="#fff" stroke="#2b7de2" stroke-width="1.25"/>
</svg>
<div class="t" style="left:713.60px;top:204.00px;font-size:5.4px;color:#7a8190;transform:scaleX(0.9444);">€ 7,220</div>
<div class="t" style="left:713.60px;top:221.00px;font-size:5.4px;color:#7a8190;transform:scaleX(0.9444);">€ 6,970</div>
<div class="t" style="left:713.60px;top:238.00px;font-size:5.4px;color:#7a8190;transform:scaleX(0.9444);">€ 6,250</div>
<div class="t" style="left:713.60px;top:255.00px;font-size:5.4px;color:#7a8190;transform:scaleX(0.9444);">€ 5,970</div>
<div class="t" style="left:713.60px;top:272.00px;font-size:5.4px;color:#7a8190;transform:scaleX(0.9444);">€ 5,320</div>
<div class="t" style="left:713.60px;top:290.00px;font-size:5.4px;color:#7a8190;transform:scaleX(0.9444);">€ 4,670</div>
<div class="t" style="left:757.20px;top:305.00px;font-size:5.4px;color:#7a8190;transform:scaleX(0.9333);">06.03</div>
<div class="t" style="left:786.50px;top:305.00px;font-size:5.4px;color:#7a8190;transform:scaleX(0.9333);">19.03</div>
<div class="t" style="left:815.70px;top:305.00px;font-size:5.4px;color:#7a8190;transform:scaleX(0.9333);">26.03</div>
<div class="t" style="left:846.00px;top:305.00px;font-size:5.4px;color:#7a8190;transform:scaleX(0.9333);">03.04</div>
<div class="t" style="left:875.50px;top:305.00px;font-size:5.4px;color:#7a8190;transform:scaleX(0.9333);">17.04</div>
<div class="t" style="left:904.70px;top:305.00px;font-size:5.4px;color:#7a8190;transform:scaleX(0.9333);">28.04</div>
<div class="t" style="left:935.00px;top:305.00px;font-size:5.4px;color:#7a8190;transform:scaleX(0.9333);">02.05</div>
<div class="t" style="left:964.30px;top:305.00px;font-size:5.4px;color:#7a8190;transform:scaleX(0.9333);">15.05</div>
<div class="card" style="left:559.5px;top:309.9px;width:329px;height:216.5px"></div>
<div class="t" style="left:586.40px;top:336.00px;font-size:9.8px;-webkit-text-stroke:0.69px;transform:scaleX(0.9230);">Distribución de precios de venta. Apartamentos</div>
<div class="t" style="left:586.40px;top:349.00px;font-size:6.2px;color:#222226;transform:scaleX(0.9406);">Este gráfico te indica cuántas propiedades hay dentro de un segmento de precio. La barra con el indicador</div>
<div class="t" style="left:586.40px;top:357.00px;font-size:6.2px;color:#222226;transform:scaleX(0.9427);">"Promedio" representa el segmento de precio en el que se inserta el precio medio solicitado, teniendo en</div>
<div class="t" style="left:586.40px;top:364.00px;font-size:6.2px;color:#222226;transform:scaleX(0.9546);">cuenta los criterios preseleccionados.</div>
<div class="cbox" style="left:586.2px;top:377.3px;width:276.2px;height:122.2px"></div>
<svg width="1024" height="546" viewBox="0 0 1024 546" style="left:0;top:0" fill="none">
<path d="M601.7 389.3 H856" stroke="#f0f2f6" stroke-width="0.8"/>
<path d="M601.7 417.7 H856" stroke="#f0f2f6" stroke-width="0.8"/>
<path d="M601.7 446.1 H856" stroke="#f0f2f6" stroke-width="0.8"/>
<path d="M601.7 474.6 H856" stroke="#f0f2f6" stroke-width="0.8"/>
<path d="M607.2 383.6 V478.8" stroke="#f0f2f6" stroke-width="0.8"/>
<path d="M629.8 383.6 V478.8" stroke="#f0f2f6" stroke-width="0.8"/>
<path d="M652.4 383.6 V478.8" stroke="#f0f2f6" stroke-width="0.8"/>
<path d="M675.0 383.6 V478.8" stroke="#f0f2f6" stroke-width="0.8"/>
<path d="M697.6 383.6 V478.8" stroke="#f0f2f6" stroke-width="0.8"/>
<path d="M720.2 383.6 V478.8" stroke="#f0f2f6" stroke-width="0.8"/>
<path d="M742.8 383.6 V478.8" stroke="#f0f2f6" stroke-width="0.8"/>
<path d="M765.4 383.6 V478.8" stroke="#f0f2f6" stroke-width="0.8"/>
<path d="M788.0 383.6 V478.8" stroke="#f0f2f6" stroke-width="0.8"/>
<path d="M810.6 383.6 V478.8" stroke="#f0f2f6" stroke-width="0.8"/>
<path d="M833.2 383.6 V478.8" stroke="#f0f2f6" stroke-width="0.8"/>
<path d="M855.8 383.6 V478.8" stroke="#f0f2f6" stroke-width="0.8"/>
<path d="M608.9 474.6 V464.7 a1.5 1.5 0 0 1 1.5 -1.5 H626.6 a1.5 1.5 0 0 1 1.5 1.5 V474.6 Z" fill="#d9dee9"/>
<path d="M631.6 474.6 V427.6 a1.5 1.5 0 0 1 1.5 -1.5 H649.3 a1.5 1.5 0 0 1 1.5 1.5 V474.6 Z" fill="#d9dee9"/>
<path d="M654.3 474.6 V438.7 a1.5 1.5 0 0 1 1.5 -1.5 H672.0 a1.5 1.5 0 0 1 1.5 1.5 V474.6 Z" fill="#d9dee9"/>
<path d="M677.0 474.6 V397.4 a1.5 1.5 0 0 1 1.5 -1.5 H694.7 a1.5 1.5 0 0 1 1.5 1.5 V474.6 Z" fill="#d9dee9"/>
<path d="M699.7 474.6 V409.1 a1.5 1.5 0 0 1 1.5 -1.5 H717.4 a1.5 1.5 0 0 1 1.5 1.5 V474.6 Z" fill="#1270e6"/>
<path d="M722.5 474.6 V434.3 a1.5 1.5 0 0 1 1.5 -1.5 H740.2 a1.5 1.5 0 0 1 1.5 1.5 V474.6 Z" fill="#d9dee9"/>
<path d="M745.2 474.6 V441.5 a1.5 1.5 0 0 1 1.5 -1.5 H762.9 a1.5 1.5 0 0 1 1.5 1.5 V474.6 Z" fill="#d9dee9"/>
<path d="M767.9 474.6 V448.6 a1.5 1.5 0 0 1 1.5 -1.5 H785.6 a1.5 1.5 0 0 1 1.5 1.5 V474.6 Z" fill="#d9dee9"/>
<path d="M790.6 474.6 V456.9 a1.5 1.5 0 0 1 1.5 -1.5 H808.3 a1.5 1.5 0 0 1 1.5 1.5 V474.6 Z" fill="#d9dee9"/>
<path d="M813.3 474.6 V471.4 a1.5 1.5 0 0 1 1.5 -1.5 H831.0 a1.5 1.5 0 0 1 1.5 1.5 V474.6 Z" fill="#d9dee9"/>
<path d="M836.0 474.6 V473.1 a0.8 0.8 0 0 1 0.8 -0.8 H854.4 a0.8 0.8 0 0 1 0.8 0.8 V474.6 Z" fill="#d9dee9"/>
<path d="M699.4 399.3 H722.6" stroke="#2a2a2e" stroke-width="0.6"/>
<path d="M708.8 402.5 h3.8 l-1.9 2.9 z" fill="#1270e6"/>
</svg>
<div class="t" style="left:699.40px;top:393.00px;font-size:5.6px;color:#2a2a2e;transform:scaleX(0.9686);">Promedio</div>
<div class="t" style="left:593.40px;top:385.00px;font-size:5.4px;color:#7a8190;">80</div>
<div class="t" style="left:593.40px;top:414.00px;font-size:5.4px;color:#7a8190;">60</div>
<div class="t" style="left:593.40px;top:442.00px;font-size:5.4px;color:#7a8190;">20</div>
<div class="t" style="left:596.40px;top:470.00px;font-size:5.4px;color:#7a8190;">0</div>
<div class="t" style="left:607.70px;top:482.00px;font-size:5.2px;color:#7a8190;transform:scaleX(0.9757);">€ 100k</div>
<div class="t" style="left:610.00px;top:488.00px;font-size:5.2px;color:#7a8190;transform:scaleX(0.9422);">150k</div>
<div class="t" style="left:629.70px;top:482.00px;font-size:5.2px;color:#7a8190;transform:scaleX(0.9757);">€ 150k</div>
<div class="t" style="left:632.00px;top:488.00px;font-size:5.2px;color:#7a8190;transform:scaleX(0.9422);">200k</div>
<div class="t" style="left:651.70px;top:482.00px;font-size:5.2px;color:#7a8190;transform:scaleX(0.9757);">€ 200k</div>
<div class="t" style="left:654.00px;top:488.00px;font-size:5.2px;color:#7a8190;transform:scaleX(0.9422);">250k</div>
<div class="t" style="left:673.70px;top:482.00px;font-size:5.2px;color:#7a8190;transform:scaleX(0.9757);">€ 250k</div>
<div class="t" style="left:676.00px;top:488.00px;font-size:5.2px;color:#7a8190;transform:scaleX(0.9422);">300k</div>
<div class="t" style="left:695.70px;top:482.00px;font-size:5.2px;color:#7a8190;transform:scaleX(0.9757);">€ 300k</div>
<div class="t" style="left:698.00px;top:488.00px;font-size:5.2px;color:#7a8190;transform:scaleX(0.9422);">400k</div>
<div class="t" style="left:719.30px;top:482.00px;font-size:5.2px;color:#7a8190;transform:scaleX(0.9757);">€ 400k</div>
<div class="t" style="left:721.60px;top:488.00px;font-size:5.2px;color:#7a8190;transform:scaleX(0.9422);">500k</div>
<div class="t" style="left:742.06px;top:482.00px;font-size:5.2px;color:#7a8190;transform:scaleX(0.9757);">€ 500k</div>
<div class="t" style="left:744.36px;top:488.00px;font-size:5.2px;color:#7a8190;transform:scaleX(0.9422);">600k</div>
<div class="t" style="left:764.82px;top:482.00px;font-size:5.2px;color:#7a8190;transform:scaleX(0.9757);">€ 600k</div>
<div class="t" style="left:767.12px;top:488.00px;font-size:5.2px;color:#7a8190;transform:scaleX(0.9422);">700k</div>
<div class="t" style="left:787.58px;top:482.00px;font-size:5.2px;color:#7a8190;transform:scaleX(0.9757);">€ 700k</div>
<div class="t" style="left:789.88px;top:488.00px;font-size:5.2px;color:#7a8190;transform:scaleX(0.9422);">800k</div>
<div class="t" style="left:810.34px;top:482.00px;font-size:5.2px;color:#7a8190;transform:scaleX(0.9757);">€ 800k</div>
<div class="t" style="left:812.64px;top:488.00px;font-size:5.2px;color:#7a8190;transform:scaleX(0.9422);">900k</div>
<div class="t" style="left:833.10px;top:482.00px;font-size:5.2px;color:#7a8190;transform:scaleX(0.9757);">€ 900k</div>
<div class="t" style="left:837.10px;top:488.00px;font-size:5.2px;color:#7a8190;transform:scaleX(0.8318);">1 M</div>
</div>
</body>
</html>
